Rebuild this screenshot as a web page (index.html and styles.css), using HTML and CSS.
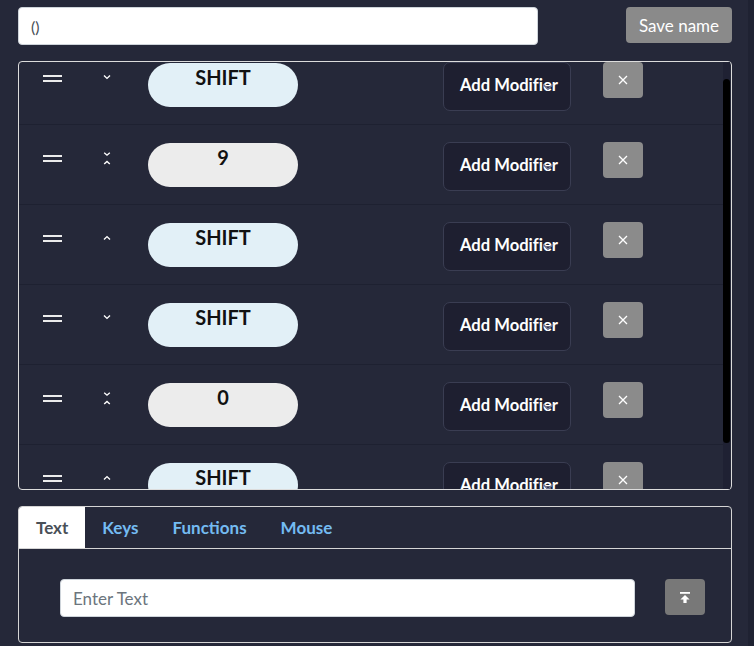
FILE: index.html
```html
<!DOCTYPE html>
<html lang="en">
<head>
<meta charset="utf-8">
<title>Macro editor</title>
<link rel="stylesheet" href="styles.css">
</head>
<body>
<div class="app">
  <div class="name-row">
    <input class="name-input" type="text" value="()">
    <button class="btn-save">Save name</button>
  </div>

  <div class="list-box">
    <div class="list" id="list">
      <div class="row">
        <div class="grip"></div>
        <svg class="dir" viewBox="0 0 8 14" width="8" height="14"><path d="M1 3.6 L4 6.4 L7 3.6" /></svg>
        <div class="pill pill-mod">SHIFT</div>
        <div class="add-mod">Add Modifier<svg class="sel-arrow" viewBox="0 0 16 16" width="12" height="12"><path d="m2 5 6 6 6-6"/></svg></div>
        <button class="btn-del"><svg viewBox="0 0 10 10" width="10" height="10"><path d="M1 1 L9 9 M9 1 L1 9"/></svg></button>
      </div>
      <div class="row">
        <div class="grip"></div>
        <svg class="dir" viewBox="0 0 8 14" width="8" height="14"><path d="M1.2 0.8 L4 3.2 L6.8 0.8 M1.2 12 L4 9.4 L6.8 12" /></svg>
        <div class="pill pill-key">9</div>
        <div class="add-mod">Add Modifier<svg class="sel-arrow" viewBox="0 0 16 16" width="12" height="12"><path d="m2 5 6 6 6-6"/></svg></div>
        <button class="btn-del"><svg viewBox="0 0 10 10" width="10" height="10"><path d="M1 1 L9 9 M9 1 L1 9"/></svg></button>
      </div>
      <div class="row">
        <div class="grip"></div>
        <svg class="dir" viewBox="0 0 8 14" width="8" height="14"><path d="M1 7.4 L4 4.6 L7 7.4" /></svg>
        <div class="pill pill-mod">SHIFT</div>
        <div class="add-mod">Add Modifier<svg class="sel-arrow" viewBox="0 0 16 16" width="12" height="12"><path d="m2 5 6 6 6-6"/></svg></div>
        <button class="btn-del"><svg viewBox="0 0 10 10" width="10" height="10"><path d="M1 1 L9 9 M9 1 L1 9"/></svg></button>
      </div>
      <div class="row">
        <div class="grip"></div>
        <svg class="dir" viewBox="0 0 8 14" width="8" height="14"><path d="M1 3.6 L4 6.4 L7 3.6" /></svg>
        <div class="pill pill-mod">SHIFT</div>
        <div class="add-mod">Add Modifier<svg class="sel-arrow" viewBox="0 0 16 16" width="12" height="12"><path d="m2 5 6 6 6-6"/></svg></div>
        <button class="btn-del"><svg viewBox="0 0 10 10" width="10" height="10"><path d="M1 1 L9 9 M9 1 L1 9"/></svg></button>
      </div>
      <div class="row">
        <div class="grip"></div>
        <svg class="dir" viewBox="0 0 8 14" width="8" height="14"><path d="M1.2 0.8 L4 3.2 L6.8 0.8 M1.2 12 L4 9.4 L6.8 12" /></svg>
        <div class="pill pill-key">0</div>
        <div class="add-mod">Add Modifier<svg class="sel-arrow" viewBox="0 0 16 16" width="12" height="12"><path d="m2 5 6 6 6-6"/></svg></div>
        <button class="btn-del"><svg viewBox="0 0 10 10" width="10" height="10"><path d="M1 1 L9 9 M9 1 L1 9"/></svg></button>
      </div>
      <div class="row">
        <div class="grip"></div>
        <svg class="dir" viewBox="0 0 8 14" width="8" height="14"><path d="M1 7.4 L4 4.6 L7 7.4" /></svg>
        <div class="pill pill-mod">SHIFT</div>
        <div class="add-mod">Add Modifier<svg class="sel-arrow" viewBox="0 0 16 16" width="12" height="12"><path d="m2 5 6 6 6-6"/></svg></div>
        <button class="btn-del"><svg viewBox="0 0 10 10" width="10" height="10"><path d="M1 1 L9 9 M9 1 L1 9"/></svg></button>
      </div>
    </div>
    <div class="vscroll"><div class="vthumb"></div></div>
  </div>

  <div class="tabs-box">
    <div class="tabs">
      <div class="tab active">Text</div>
      <div class="tab">Keys</div>
      <div class="tab">Functions</div>
      <div class="tab">Mouse</div>
    </div>
    <div class="tab-body">
      <input class="text-input" type="text" placeholder="Enter Text">
      <button class="btn-send"><svg viewBox="0 0 10 11" width="10" height="11"><rect x="0" y="0" width="10" height="1.8"/><path d="M5 3 L9.6 7.6 H6.6 V11 H3.4 V7.6 H0.4 Z"/></svg></button>
    </div>
  </div>
</div>
<script src="script.js"></script>
</body>
</html>
```

FILE: styles.css
```css
html {
  background: linear-gradient(to left, #1f2232 6px, #252839 6px);
  min-height: 100%;
}
body {
  margin: 0;
  font-family: Lato, "Open Sans", "DejaVu Sans", sans-serif;
  font-variant-ligatures: none;
  color: #fff;
}
.app {
  padding: 7px 22px 0 18px;
}
.name-row {
  display: flex;
  justify-content: space-between;
  align-items: flex-start;
  margin-bottom: 16px;
}
.name-input {
  width: 520px;
  height: 38px;
  box-sizing: border-box;
  border: 1px solid #ced4da;
  border-radius: 4px;
  padding: 0 12px;
  font: 16px Lato, sans-serif;
  color: #495057;
  background: #fff;
  outline: none;
}
.btn-save {
  width: 106px;
  height: 36px;
  border: 0;
  border-radius: 4px;
  background: #8a8a8a;
  color: #fff;
  font: 17px Lato, sans-serif;
  padding: 0;
}
.list-box {
  position: relative;
  border: 1px solid #dcdcdc;
  border-radius: 4px;
  margin-bottom: 16px;
}
.list {
  height: 427px;
  box-sizing: border-box;
  overflow: hidden;
  padding: 3px 8px 18px 0;
}
.vscroll {
  position: absolute;
  top: 0;
  right: 1px;
  bottom: 0;
  width: 7px;
  background: #1f2133;
}
.vthumb {
  position: absolute;
  top: 17px;
  left: 0;
  right: 0;
  height: 364px;
  background: #000;
  border-radius: 4px;
}
.row {
  height: 80px;
  box-sizing: border-box;
  border-bottom: 1px solid #1e2131;
  display: flex;
  align-items: flex-start;
  padding-top: 17px;
}
.grip {
  width: 19px;
  height: 3px;
  border-top: 2px solid #ececec;
  border-bottom: 2px solid #ececec;
  margin: 13px 0 0 24px;
}
.dir {
  margin: 10px 0 0 41px;
  fill: none;
  stroke: #fff;
  stroke-width: 1.4;
}
.pill {
  width: 150px;
  height: 44px;
  box-sizing: border-box;
  margin: 1px 0 0 37px;
  border-radius: 22px;
  padding-top: 2px;
  text-align: center;
  font: 700 20px/24px Lato, sans-serif;
  color: #111;
}
.pill-mod {
  background: #e2f0f7;
}
.pill-key {
  background: #ececec;
}
.add-mod {
  position: relative;
  width: 128px;
  height: 49px;
  box-sizing: border-box;
  margin-left: 145px;
  border: 1px solid #3a3d52;
  border-radius: 7px;
  background: #1e1f30;
  display: flex;
  align-items: center;
  padding: 0 0 3px 16px;
  font: 700 16.6px Lato, sans-serif;
  font-variant-ligatures: none;
  color: #fff;
  white-space: nowrap;
}
.sel-arrow {
  position: absolute;
  right: 16px;
  top: 18px;
  fill: none;
  stroke: #6d7394;
  stroke-width: 2.2;
  stroke-linecap: round;
  stroke-linejoin: round;
}
.btn-del {
  width: 40px;
  height: 36px;
  margin-left: 32px;
  border: 0;
  border-radius: 4px;
  background: #8b8b8b;
  padding: 0;
  display: flex;
  align-items: center;
  justify-content: center;
}
.btn-del svg {
  stroke: #fff;
  stroke-width: 1.3;
  margin-top: -1px;
}
.tabs-box {
  border: 1px solid #d5d5d5;
  border-radius: 4px;
}
.tabs {
  display: flex;
  border-bottom: 1px solid #d5d5d5;
}
.tab {
  padding: 8px 16px;
  border: 1px solid transparent;
  border-bottom: 0;
  font: 700 17px/24px Lato, sans-serif;
  color: #74bbf2;
}
.tab.active {
  background: #fff;
  color: #495057;
  border-radius: 3px 0 0 0;
}
.tab-body {
  display: flex;
  align-items: flex-start;
  gap: 30px;
  padding: 30px 26px 25px 41px;
}
.text-input {
  flex: 1;
  min-width: 0;
  height: 38px;
  box-sizing: border-box;
  border: 1px solid #ced4da;
  border-radius: 4px;
  padding: 0 12px;
  font: 17px Lato, sans-serif;
  color: #495057;
  background: #fff;
  outline: none;
}
.text-input::placeholder {
  color: #6c757d;
}
.btn-send {
  flex: none;
  width: 40px;
  height: 36px;
  border: 0;
  border-radius: 4px;
  background: #787878;
  padding: 0;
  display: flex;
  align-items: center;
  justify-content: center;
}
.btn-send svg {
  fill: #fff;
}
```

FILE: script.js
```js
document.getElementById('list').scrollTop = 20;
```
